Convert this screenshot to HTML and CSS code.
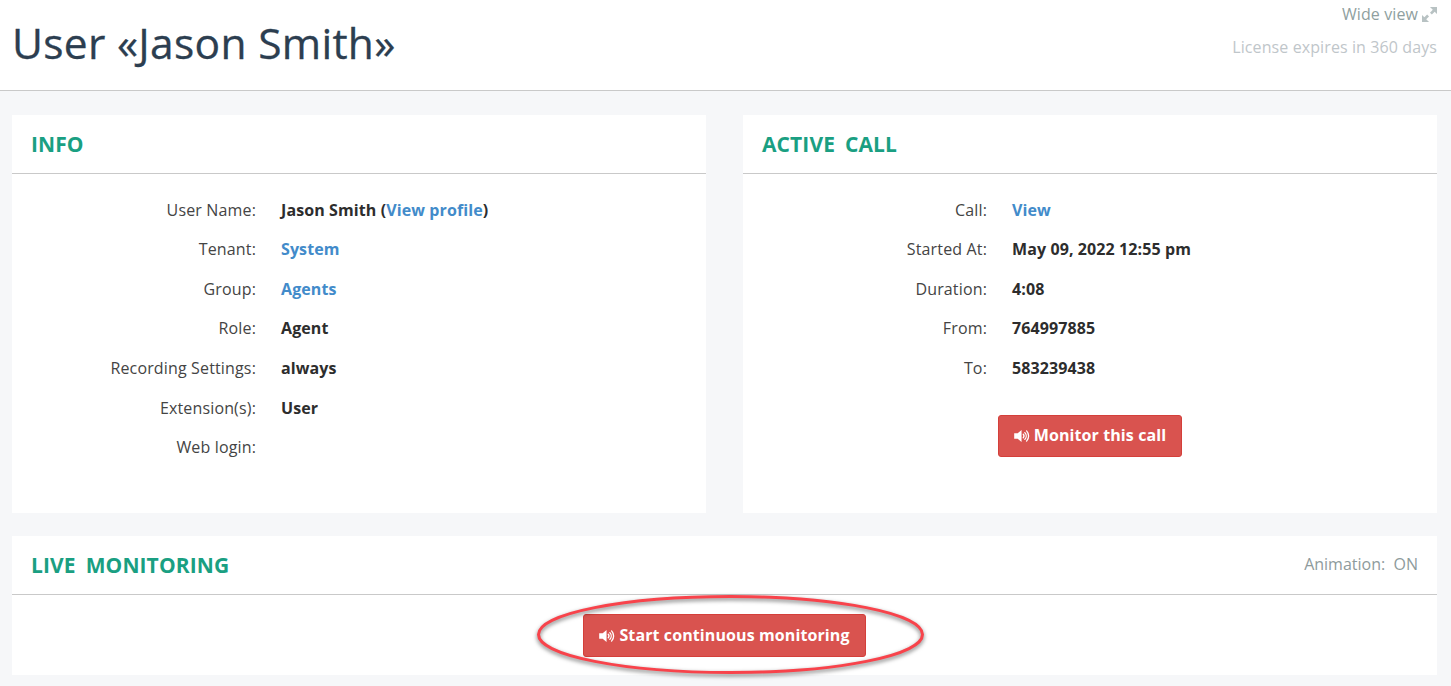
FILE: index.html
```html
<!DOCTYPE html>
<html lang="en">
<head>
<meta charset="utf-8">
<title>User «Jason Smith»</title>
<link rel="stylesheet" href="styles.css">
</head>
<body>
<svg class="icon-defs" width="0" height="0" aria-hidden="true">
  <symbol id="vol" viewBox="0 0 18 14">
    <path fill="currentColor" d="M8 .6v12.800L3.900 9.800H.2V4.200h3.700z"/>
    <path fill="none" stroke="currentColor" stroke-width="1.400" stroke-linecap="round" d="M9.800 5.200c.9 1 .9 2.600 0 3.600M11.500 3.400c1.900 2 1.900 5.200 0 7.200M13.300 1.600c2.900 3.100 2.900 7.700 0 10.800"/>
  </symbol>
</svg>
<header class="top">
  <h1 class="title">User «Jason Smith»</h1>
  <div class="top-side">
    <a class="wide">Wide view
      <svg class="expand" viewBox="0 0 16 16" aria-hidden="true"><path fill="currentColor" d="M8.500 0H16v7.500l-2.500-2.500-3 3-2-2 3-3zM7.500 16H0V8.500L2.500 11l3-3 2 2-3 3z"/></svg>
    </a>
    <div class="license">License expires in 360 days</div>
  </div>
</header>
<main class="content">
  <div class="columns">
    <section class="panel">
      <div class="panel-head"><h2>INFO</h2></div>
      <dl class="rows">
        <dt>User Name:</dt><dd>Jason Smith (<a>View profile</a>)</dd>
        <dt>Tenant:</dt><dd><a>System</a></dd>
        <dt>Group:</dt><dd><a>Agents</a></dd>
        <dt>Role:</dt><dd>Agent</dd>
        <dt>Recording Settings:</dt><dd>always</dd>
        <dt>Extension(s):</dt><dd>User</dd>
        <dt>Web login:</dt><dd></dd>
      </dl>
    </section>
    <section class="panel">
      <div class="panel-head"><h2>ACTIVE CALL</h2></div>
      <dl class="rows">
        <dt>Call:</dt><dd><a>View</a></dd>
        <dt>Started At:</dt><dd>May 09, 2022 12:55 pm</dd>
        <dt>Duration:</dt><dd>4:08</dd>
        <dt>From:</dt><dd>764997885</dd>
        <dt>To:</dt><dd>583239438</dd>
      </dl>
      <div class="center monitor">
        <button class="btn"><svg class="vol"><use href="#vol"/></svg>Monitor this call</button>
      </div>
    </section>
  </div>
  <section class="panel live">
    <div class="panel-head">
      <h2>LIVE MONITORING</h2>
      <span class="animation">Animation:&nbsp; ON</span>
    </div>
    <div class="center live-body">
      <button class="btn btn-big"><svg class="vol"><use href="#vol"/></svg>Start continuous monitoring</button>
      <svg class="callout" viewBox="0 0 400 90" aria-hidden="true">
        <ellipse cx="200.500" cy="42.500" rx="192" ry="38"/>
      </svg>
    </div>
  </section>
</main>
</body>
</html>
```
FILE: styles.css
```css
* { box-sizing: border-box; }
html, body { margin: 0; padding: 0; }
body {
  height: 686px;
  overflow: hidden;
  background: #f6f7f9;
  font-family: "Open Sans", sans-serif;
  font-size: 16px;
  color: #333;
}
.icon-defs { position: absolute; }
.top {
  height: 91px;
  background: #fff;
  border-bottom: 1px solid #c9c9c9;
  display: flex;
  justify-content: space-between;
  padding: 0 14px 0 12px;
}
.title {
  margin: 14px 0 0;
  font-size: 42.500px;
  line-height: 58px;
  font-weight: 500;
  letter-spacing: .3px;
  -webkit-text-stroke: .3px #2c3e50;
  color: #2c3e50;
}
.top-side {
  display: flex;
  flex-direction: column;
  align-items: flex-end;
  padding-top: 3px;
  font-size: 16px;
  line-height: 22px;
}
.wide { color: #8f9fa0; display: flex; align-items: center; gap: 4px; letter-spacing: .1px; }
.expand { width: 15px; height: 15px; color: #b8c2c3; }
.license { margin-top: 11px; color: #bfc6ca; letter-spacing: .1px; }
.content { padding: 24px 14px 0 12px; }
.columns { display: grid; grid-template-columns: 694px 694px; gap: 37px; }
.panel { background: #fff; height: 398px; }
.panel-head {
  height: 59px;
  border-bottom: 1px solid #c9c9c9;
  padding: 0 19px;
  display: flex;
  align-items: center;
  justify-content: space-between;
}
.panel-head h2 {
  margin: 0;
  font-size: 21px;
  line-height: 28px;
  font-weight: 700;
  color: #1a9f82;
  word-spacing: 4.500px;
  letter-spacing: .1px;
}
.rows {
  margin: 16.600px 0 0;
  display: grid;
  grid-template-columns: 244px 1fr;
  column-gap: 25px;
  grid-auto-rows: 39.6px;
  line-height: 39.600px;
}
.rows dt { text-align: right; color: #444; letter-spacing: .15px; }
.rows dd { margin: 0; font-weight: 700; color: #2d2d2d; letter-spacing: .1px; }
.rows a { color: #428bca; }
.center { display: flex; justify-content: center; }
.monitor { margin-top: 26px; }
.btn {
  font: 700 16px "Open Sans", sans-serif;
  letter-spacing: .1px;
  color: #fff;
  background: #d9534f;
  border: 1px solid #d43f3a;
  border-radius: 3px;
  height: 42px;
  padding: 0 15px 2px;
  display: flex;
  align-items: center;
  gap: 3px;
}
.btn-big { height: 43px; }
.vol { width: 17px; height: 14px; color: #fff; margin-top: 2px; }
.live { height: 139px; margin-top: 23px; }
.animation { font-size: 16px; line-height: 22px; margin-bottom: 2px; color: #8e9b9c; }
.live-body { position: relative; padding-top: 19px; }
.callout {
  position: absolute;
  left: 518px;
  top: -3px;
  width: 400px;
  height: 90px;
  overflow: visible;
  pointer-events: none;
}
.callout ellipse {
  fill: none;
  stroke: #f8434b;
  stroke-width: 3;
  filter: drop-shadow(0 2px 2px rgba(0,0,0,.55));
}
```
